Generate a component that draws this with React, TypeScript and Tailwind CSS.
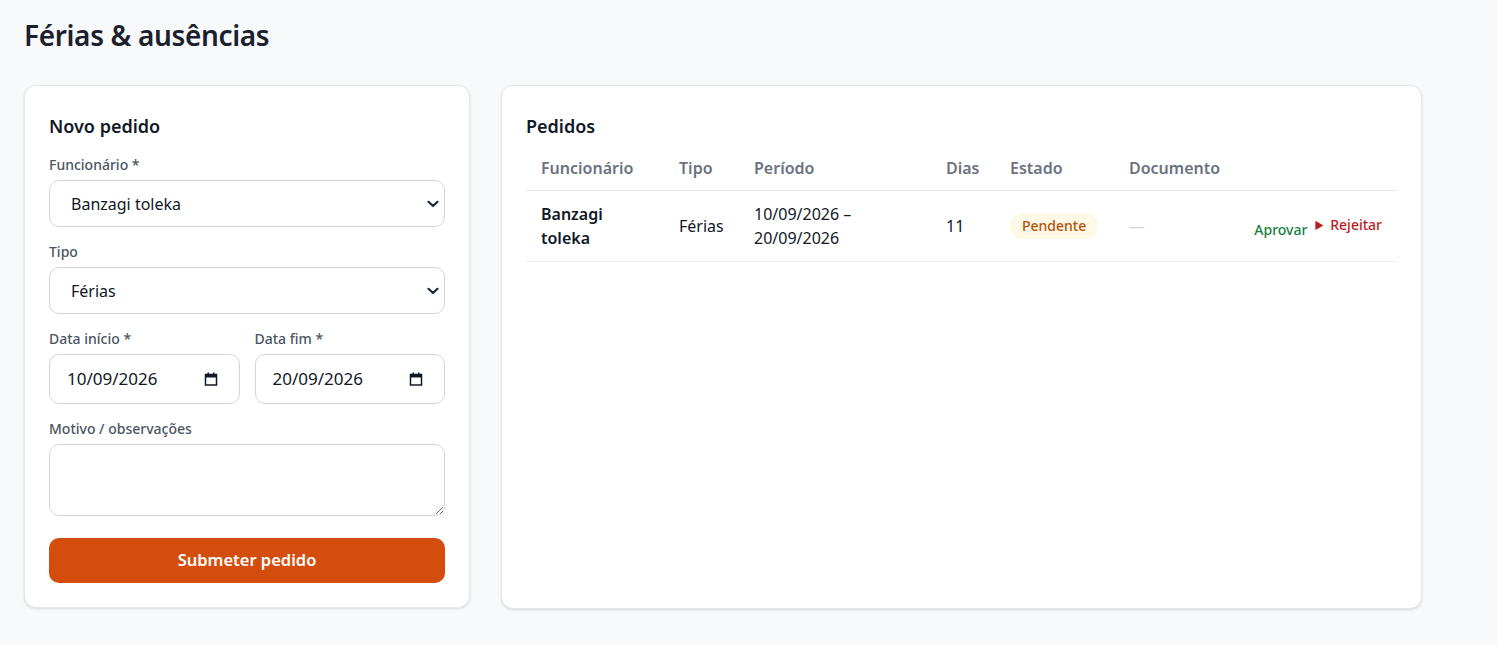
import React from "react";

function Chevron() {
  return (
    <svg width="12" height="8" viewBox="0 0 12 8" className="pointer-events-none absolute right-[6px] top-1/2 -translate-y-1/2" fill="none">
      <path d="M1.5 1.8 L6 6 L10.5 1.8" stroke="#1f2937" strokeWidth="2.2" strokeLinecap="round" strokeLinejoin="round" />
    </svg>
  );
}

function Calendar() {
  return (
    <svg width="14" height="14" viewBox="0 0 14 14" fill="none" className="shrink-0">
      <rect x="1.5" y="2.5" width="11" height="10.5" stroke="#111827" strokeWidth="1.5" />
      <rect x="1.5" y="2.5" width="11" height="3" fill="#111827" />
      <rect x="3.5" y="0.5" width="1.5" height="2.5" fill="#111827" />
      <rect x="9" y="0.5" width="1.5" height="2.5" fill="#111827" />
    </svg>
  );
}

function SelectField({ value }: { value: string }) {
  return (
    <div className="relative">
      <select className="appearance-none w-full h-[47px] border border-[#d1d5db] rounded-[10px] pl-[21px] pr-8 text-[16px] bg-white text-[#111827] outline-none">
        <option>{value}</option>
      </select>
      <Chevron />
    </div>
  );
}

function DateField({ value }: { value: string }) {
  return (
    <div className="flex items-center h-[50px] border border-[#d1d5db] rounded-[10px] bg-white pl-[17px] pr-[21px]">
      <input type="text" defaultValue={value} className="flex-1 min-w-0 text-[17px] text-[#111827] outline-none bg-transparent" />
      <Calendar />
    </div>
  );
}

export default function App() {
  const font = { fontFamily: '"Noto Sans", "Open Sans", sans-serif' };
  const label = "block text-[14px] leading-[20px] font-medium text-[#4b5563] mb-[5px]";
  return (
    <div className="min-h-[645px] bg-[#f8f9fb] p-6 text-[#111827]" style={font}>
      <h1 className="text-[28px] font-semibold leading-[24px] -mt-[1px] mb-[38px] tracking-[-0.35px] text-[#1a202c]">Férias &amp; ausências</h1>
      <div className="grid grid-cols-[446px_921px] gap-[31px] items-start">
        <div className="bg-white border border-[#e5e7eb] rounded-xl shadow-sm p-6">
          <h2 className="text-[18px] font-semibold leading-[28px] mt-[2px] mb-[15px]">Novo pedido</h2>
          <div className="flex flex-col gap-[15px]">
            <div>
              <label className={label}>Funcionário *</label>
              <SelectField value="Banzagi toleka" />
            </div>
            <div>
              <label className={label}>Tipo</label>
              <SelectField value="Férias" />
            </div>
            <div className="grid grid-cols-2 gap-[15px]">
              <div>
                <label className={label}>Data início *</label>
                <DateField value="10/09/2026" />
              </div>
              <div>
                <label className={label}>Data fim *</label>
                <DateField value="20/09/2026" />
              </div>
            </div>
            <div>
              <label className={label}>Motivo / observações</label>
              <textarea className="block w-full h-[72px] border border-[#d1d5db] rounded-[10px] px-4 py-2 text-[16px] bg-white outline-none" />
            </div>
            <button className="mt-[7px] h-[45px] w-full rounded-[10px] bg-[#d44d0d] text-white text-[16.5px] font-semibold">Submeter pedido</button>
          </div>
        </div>
        <div className="bg-white border border-[#e5e7eb] rounded-xl shadow-sm p-6 h-[524px]">
          <h2 className="text-[18px] font-semibold leading-[28px] mt-[2px] mb-[6px]">Pedidos</h2>
          <table className="w-full table-fixed border-collapse text-[16px]">
            <thead>
              <tr className="border-b border-[#e5e7eb] text-left text-[#6b7280]">
                <th className="w-[138px] px-[15px] py-[10px] font-semibold leading-[24px]">Funcionário</th>
                <th className="w-[75px] px-[15px] py-[10px] font-semibold leading-[24px]">Tipo</th>
                <th className="w-[192px] px-[15px] py-[10px] font-semibold leading-[24px]">Período</th>
                <th className="w-[64px] px-[15px] py-[10px] font-semibold leading-[24px]">Dias</th>
                <th className="w-[119px] px-[15px] py-[10px] font-semibold leading-[24px]">Estado</th>
                <th className="px-[15px] py-[10px] font-semibold leading-[24px]">Documento</th>
                <th className="w-[160px] px-[15px] py-[10px]"></th>
              </tr>
            </thead>
            <tbody>
              <tr className="border-b border-[#eceef1]">
                <td className="px-[15px] py-[11px] font-semibold leading-[24px]">Banzagi toleka</td>
                <td className="px-[15px] py-[11px] leading-[24px]">Férias</td>
                <td className="px-[15px] py-[11px] leading-[24px]">10/09/2026 – 20/09/2026</td>
                <td className="px-[15px] py-[11px] leading-[24px]">11</td>
                <td className="px-[15px] py-[11px]">
                  <span className="inline-block rounded-full bg-[#fef8e6] text-[#b45309] text-[14px] font-medium px-3 leading-[26px]">Pendente</span>
                </td>
                <td className="px-[15px] py-[11px] text-[#d1d5db]">—</td>
                <td className="px-[15px] py-[11px]">
                  <div className="flex justify-end items-center gap-2 text-[14px] font-medium">
                    <button className="text-[#15803d] pt-[6px] font-medium">Aprovar</button>
                    <details className="text-[#b91c1c] -mt-[4px]">
                      <summary className="cursor-pointer">Rejeitar</summary>
                    </details>
                  </div>
                </td>
              </tr>
            </tbody>
          </table>
        </div>
      </div>
    </div>
  );
}
